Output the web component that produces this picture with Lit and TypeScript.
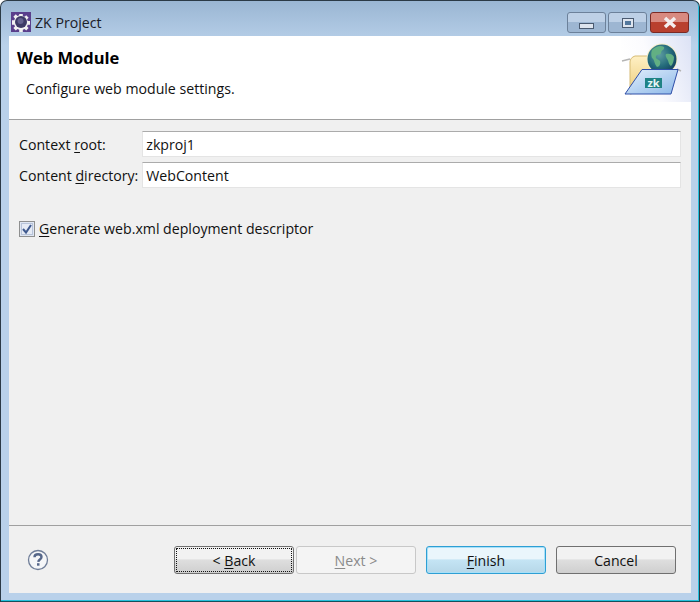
import { LitElement, html, css, svg } from "lit";
import { customElement } from "lit/decorators.js";

const gear = svg`<svg width="20" height="20" viewBox="0 0 20 20">
<rect width="20" height="20" fill="#5a3f8c"/>
<path d="M8 1h4v2.500l2 .8 1.800-1.800 2.700 2.700-1.800 1.800.8 2h2.500v4h-2.500l-.8 2 1.800 1.800-2.700 2.700-1.800-1.800-2 .8v2.500H8v-2.500l-2-.8-1.800 1.800-2.700-2.700 1.800-1.800-.8-2H0V8h2.500l.8-2-1.800-1.800 2.700-2.700L6 3.300l2-.8z" fill="#f2f2f2" transform="translate(1 1) scale(.9)"/>
<circle cx="10" cy="10" r="6" fill="#3d3a66"/><circle cx="9.500" cy="9" r="3" fill="#64628f"/></svg>`;

const banner = svg`<svg width="70" height="66" viewBox="0 0 70 66">
<defs>
<linearGradient id="bg" x1="0" y1="0.300" x2="1" y2="0"><stop offset="0" stop-color="#fff"/><stop offset=".35" stop-color="#fbfbfe"/><stop offset="1" stop-color="#dce2f5"/></linearGradient>
<radialGradient id="globe" cx=".4" cy=".35" r=".7"><stop offset="0" stop-color="#5f9ea2"/><stop offset=".6" stop-color="#236a7a"/><stop offset="1" stop-color="#143f5e"/></radialGradient>
<linearGradient id="front" x1="0" y1="0" x2="1" y2="1"><stop offset="0" stop-color="#e4f0fc"/><stop offset="1" stop-color="#8cb8e8"/></linearGradient>
<linearGradient id="back" x1="0" y1="0" x2="0" y2="1"><stop offset="0" stop-color="#fff0c4"/><stop offset="1" stop-color="#eccb78"/></linearGradient>
</defs>
<rect width="70" height="66" fill="url(#bg)"/>
<path d="M9 26c0-3 2-5 5-6h15l3 8-8 27-15 3z" fill="url(#back)" stroke="#d6bb74"/>
<circle cx="41" cy="23" r="15.500" fill="#f6eec8"/>
<circle cx="41" cy="23" r="14.500" fill="url(#globe)"/>
<path d="M31 14c4-4 9-5 12-3 1 3-3 3-3 6 0 2-4 1-5 3-1 3 2 3 4 5 1 3-1 6-3 6-3-3-2-7-5-9-1-3-1-5 0-8zM45 18c3-1 7 0 8 3 0 3-1 7-3 9-3-2-2-5-4-7-1-2-2-4-1-5z" fill="#62b083"/>
<path d="M1 25l8-2M56 33l4 2" stroke="#b5b5b5" stroke-width="1.500"/>
<path d="M21 33.500h36l-7 24.500H4z" fill="url(#front)" stroke="#2f4ea8" stroke-width="1"/>
<rect x="24" y="42" width="17" height="10" fill="#1f8284"/>
<text class="zk" x="32.500" y="50.500" text-anchor="middle">zk</text>
</svg>`;

const help = svg`<svg width="22" height="22" viewBox="0 0 22 22"><circle cx="11" cy="11" r="9.500" fill="#f5f6f8" stroke="#6f7d98" stroke-width="1.300"/><path d="M7.500 8.300c0-2 1.600-3 3.600-3s3.400 1.100 3.400 2.800c0 2.500-3 2.400-3.200 4.700" fill="none" stroke="#56678a" stroke-width="2.400"/><rect x="10" y="14.200" width="2.500" height="2.500" fill="#56678a"/></svg>`;

@customElement("app-root")
export class AppRoot extends LitElement {
  static styles = css`
    :host { display: block; width: 700px; height: 602px; font: 14.15px "Open Sans", "Noto Sans", sans-serif; color: #111; background: #fff; }
    .win { box-sizing: border-box; width: 700px; height: 602px; display: flex; flex-direction: column; border: 1px solid #2b3a46; border-bottom-color: #14505c; border-radius: 7px 7px 0 0; background: linear-gradient(#9ab6d3, #b9d1ea 44px); box-shadow: inset -1px -1px 0 #25c0dc; padding: 0 8px 8px 8px; }
    .title { height: 35px; flex: none; display: flex; align-items: flex-start; padding: 11px 0 0 2px; gap: 4px; box-sizing: border-box; }
    .title svg { display: block; }
    .name { font-size: 14.15px; line-height: 22px; color: #1a2028; flex: 1; }
    .caps { display: flex; gap: 2px; margin-right: 2px; }
    .cap { width: 39px; height: 21px; box-sizing: border-box; border: 1px solid #6c819a; border-radius: 3px; display: flex; align-items: center; justify-content: center; background: linear-gradient(#bdd0e6 0 50%, #9db6d2 50% 100%); }
    .cap.close { border-color: #7a2a25; background: linear-gradient(#d88a80 0 50%, #b9402e 50% 100%); margin-left: 1px; }
    .min { width: 13px; height: 4px; border: 1px solid #4a5a70; background: #dde4ee; margin-top: 6px; }
    .max { width: 12px; height: 10px; border: 1px solid #4a5a70; background: #dde4ee; display: flex; align-items: center; justify-content: center; box-sizing: border-box; }
    .max::before { content: ""; width: 6px; height: 4px; background: #52779c; }
    .x { display: block; }
    .client { flex: 1; min-height: 0; display: flex; flex-direction: column; background: #f0f0f0; }
    .head { flex: none; background: #fff; border-bottom: 1px solid #a0a0a0; box-sizing: border-box; height: 84px; display: flex; align-items: flex-start; }
    .htext { flex: 1; padding: 10px 8px; }
    h1 { font-size: 16.5px; font-weight: 700; margin: 0; line-height: 24px; color: #000; }
    .desc { margin: 9px 0 0 9px; line-height: 20px; color: #111; }
    .banner { flex: none; display: block; }
    .zk { font: 700 11px "Open Sans", sans-serif; fill: #e8f6f6; }
    .form { flex: 1; padding: 11px 10px 0 10px; display: flex; flex-direction: column; }
    .grid { display: grid; grid-template-columns: auto 1fr; gap: 5px 4px; align-items: center; }
    .input { height: 26px; box-sizing: border-box; background: #fff; border: 1px solid #e4e4e4; border-top-color: #ababab; padding: 1px 3px 0; line-height: 24px; color: #111; }
    u { text-underline-offset: 2px; }
    .check { display: flex; align-items: center; gap: 4px; margin-top: 31px; }
    .box { width: 16px; height: 16px; flex: none; }
    .foot { height: 68px; flex: none; border-top: 1px solid #a0a0a0; box-sizing: border-box; display: flex; align-items: center; padding: 0 15px 0 18px; }
    .spacer { flex: 1; }
    .foot svg { display: block; }
    .btns { display: flex; gap: 10px; }
    .pair { display: flex; gap: 2px; }
    .btn { width: 120px; height: 28px; box-sizing: border-box; border: 1px solid #707070; border-radius: 3px; background: linear-gradient(#f2f2f2 0 45%, #dedede 50%, #cfcfcf 100%); text-align: center; line-height: 27px; color: #111; }
    .btn.back { outline: 1px dotted #111; outline-offset: -3px; }
    .btn.dis { background: #f4f4f4; border-color: #c8c8c8; color: #8a8a8a; }
    .btn.def { border-color: #2e9fd4; background: linear-gradient(#eaf6fc 0 45%, #c4e4f4 50%, #b6d7e8 100%); box-shadow: inset 0 0 0 1px #a8e0f8; }
  `;

  render() {
    return html`<div class="win">
      <div class="title">${gear}<span class="name">ZK Project</span>
        <div class="caps">
          <div class="cap"><div class="min"></div></div>
          <div class="cap"><div class="max"></div></div>
          <div class="cap close"><svg class="x" width="16" height="13" viewBox="0 0 16 13"><path d="M3 2l10 9M13 2l-10 9" stroke="#f4eeee" stroke-width="3.500"/></svg></div>
        </div>
      </div>
      <div class="client">
        <div class="head">
          <div class="htext"><h1>Web Module</h1><div class="desc">Configure web module settings.</div></div>
          ${banner}
        </div>
        <div class="form">
          <div class="grid">
            <span>Context <u>r</u>oot:</span><div class="input">zkproj1</div>
            <span>Content <u>d</u>irectory:</span><div class="input">WebContent</div>
          </div>
          <div class="check">
            <svg class="box" viewBox="0 0 16 16"><rect x=".5" y=".5" width="15" height="15" fill="#dfe6f2" stroke="#8e8f8f"/><rect x="2.500" y="2.500" width="11" height="11" fill="#e6ebf5" stroke="#b8c4da"/><path d="M4 8l3 3.500 5-7.500" fill="none" stroke="#3f5a8f" stroke-width="2"/></svg>
            <span><u>G</u>enerate web.xml deployment descriptor</span>
          </div>
        </div>
        <div class="foot">
          ${help}<div class="spacer"></div>
          <div class="btns">
            <div class="pair">
              <div class="btn back">&lt; <u>B</u>ack</div>
              <div class="btn dis"><u>N</u>ext &gt;</div>
            </div>
            <div class="btn def"><u>F</u>inish</div>
            <div class="btn">Cancel</div>
          </div>
        </div>
      </div>
    </div>`;
  }
}
